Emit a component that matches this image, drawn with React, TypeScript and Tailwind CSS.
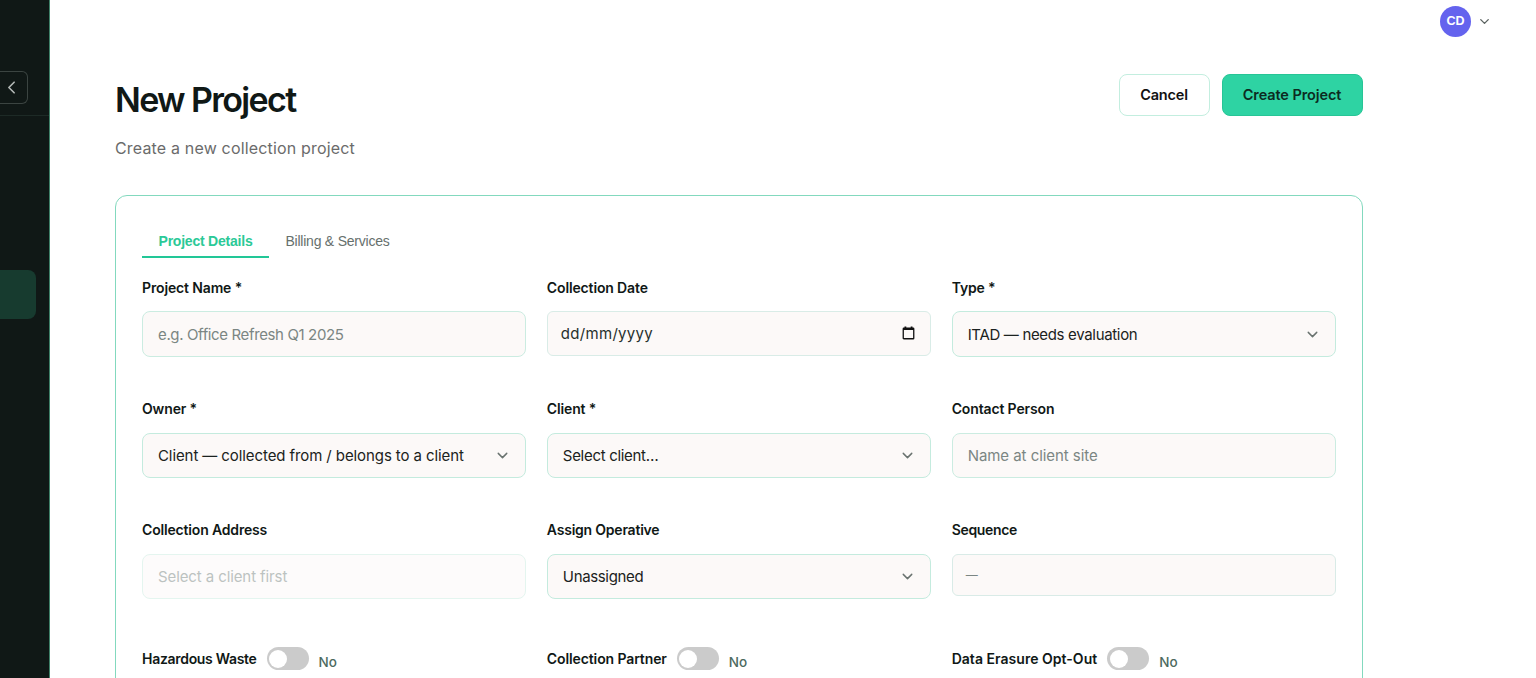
import React, { useState } from 'react';
import { ChevronDown, ChevronLeft } from 'lucide-react';

interface FieldProps {
  label: string;
  tracking?: string;
  children: React.ReactNode;
}

function Field({ label, tracking = 'tracking-[-0.14px]', children }: FieldProps) {
  return (
    <div className="h-[121.2px]">
      <label className={`block h-[33.4px] text-[14px] leading-5 font-semibold text-[#101816] ${tracking}`}>{label}</label>
      {children}
    </div>
  );
}

function TextInput({ placeholder, disabled, tracking = '' }: { placeholder: string; disabled?: boolean; tracking?: string }) {
  return (
    <input
      type="text"
      placeholder={placeholder}
      disabled={disabled}
      className={`block w-full h-[45.4px] px-[15px] pt-[1px] rounded-lg border border-[#cbece1] bg-[#fcf9f8] text-[15px] placeholder-[#7b8683] outline-none disabled:opacity-50 ${tracking}`}
    />
  );
}

function SelectBox({ value, tracking = '' }: { value: string; tracking?: string }) {
  return (
    <button
      type="button"
      className="flex items-center justify-between w-full h-[45.4px] pl-[15px] pr-3.5 rounded-lg border border-[#c4ebde] bg-[#fcf9f8] text-[15px] text-[#1b2220]"
    >
      <span className={`pt-[1.5px] ${tracking}`}>{value}</span>
      <ChevronDown size={17} strokeWidth={2} className="text-[#6a7370]" />
    </button>
  );
}

function Toggle({ label, tracking = '' }: { label: string; tracking?: string }) {
  const [on, setOn] = useState(false);

  return (
    <div className="flex items-center h-6">
      <span className={`text-[14px] leading-5 font-semibold text-[#101816] whitespace-nowrap ${tracking}`}>{label}</span>
      <button
        type="button"
        onClick={() => setOn(!on)}
        className={`flex items-center ml-2.5 w-[42px] h-[23px] px-[2.5px] rounded-full ${on ? 'justify-end bg-[#2ed3a3]' : 'bg-[#cbcbcb]'}`}
      >
        <span className="w-[18px] h-[18px] rounded-full bg-white" />
      </button>
      <span className="ml-2.5 pt-1.5 text-[13.5px] leading-5 font-medium text-[#4d6a60]">{on ? 'Yes' : 'No'}</span>
    </div>
  );
}

export default function App() {
  const [tab, setTab] = useState('details');

  return (
    <div className="flex h-[678px] overflow-hidden bg-white font-['Inter','Liberation_Sans',sans-serif]">
      {/* Sidebar */}
      <aside className="w-[50px] shrink-0 bg-[#101816] border-r border-[#3f8068]">
        <div className="h-[116px] pt-[71px] border-b border-[#1d2a26]">
          <button className="flex items-center w-7 h-[33px] pl-[1px] rounded-r-md border border-l-0 border-[#3b4441] text-[#b4b9b7]">
            <ChevronLeft size={21} strokeWidth={1.9} />
          </button>
        </div>
        <div className="mt-[154px] w-9 h-[49px] rounded-r-lg bg-[#173b2f]" />
      </aside>

      <div className="flex-1 min-w-0">
        {/* Top bar */}
        <header className="flex items-center justify-end h-11 pr-11">
          <div className="flex items-center justify-center w-[31px] h-[31px] mb-px rounded-full bg-[#6463ee] text-white font-['Liberation_Sans',sans-serif] text-[12.5px] font-bold">
            CD
          </div>
          <ChevronDown size={15} strokeWidth={2.2} className="mb-px ml-1.5 text-[#5c6361]" />
        </header>

        <main className="ml-[65px] w-[1247.5px]">
          <div className="flex items-start justify-between h-[151px] pt-[30px]">
            <div>
              <h1 className="pt-1 text-[34px] leading-[44px] font-semibold tracking-[-1.65px] text-[#101816]">New Project</h1>
              <p className="mt-3.5 text-base leading-6 tracking-[0.17px] text-[#6b6b6b]">Create a new collection project</p>
            </div>
            <div className="flex gap-3">
              <button className="w-[91px] h-[42px] rounded-lg border border-[#c3eedf] bg-white text-[14.5px] font-semibold tracking-[-0.2px] text-[#111]">
                Cancel
              </button>
              <button className="w-[141px] h-[42px] rounded-lg border border-[#27c596] bg-[#2ed3a3] text-[14.5px] font-semibold tracking-[-0.1px] text-[#0c2b21]">
                Create Project
              </button>
            </div>
          </div>

          {/* Form card */}
          <section className="h-[560px] rounded-xl border border-[#83d9be] bg-white px-[26px] pt-[29px]">
            <div className="flex h-[53px] font-['Liberation_Sans',sans-serif] text-[14px] tracking-[-0.22px]">
              <button
                onClick={() => setTab('details')}
                className={`w-[127px] h-[33px] pt-px border-b-2 whitespace-nowrap ${tab === 'details' ? 'border-[#22c797] text-[#2bc997] font-bold' : 'border-transparent text-[#66706d]'}`}
              >
                Project Details
              </button>
              <button
                onClick={() => setTab('billing')}
                className={`w-[137px] h-[33px] pt-px border-b-2 whitespace-nowrap ${tab === 'billing' ? 'border-[#22c797] text-[#2bc997] font-bold' : 'border-transparent text-[#66706d]'}`}
              >
                Billing &amp; Services
              </button>
            </div>

            <div className="grid grid-cols-3 gap-x-[21px]">
              <Field label="Project Name *">
                <TextInput placeholder="e.g. Office Refresh Q1 2025" tracking="tracking-[-0.37px]" />
              </Field>
              <Field label="Collection Date">
                <div className="flex items-center justify-between h-[44.4px] pl-[13px] pr-[15px] rounded-md border border-[#d9ece7] bg-[#fcf9f8] text-[15px] text-[#27302d]">
                  <span className="pt-[1.5px] tracking-[0.3px]">dd/mm/yyyy</span>
                  <svg width="13" height="14" viewBox="0 0 13 14" fill="none" className="mb-px text-[#111]">
                    <rect x="1.25" y="2.25" width="10.5" height="10.5" rx="0.6" stroke="currentColor" strokeWidth="1.3" />
                    <path d="M1 3.2h11M3.4 0.6v2M9.6 0.6v2" stroke="currentColor" strokeWidth="1.8" />
                  </svg>
                </div>
              </Field>
              <Field label="Type *">
                <SelectBox value="ITAD — needs evaluation" tracking="tracking-[-0.33px]" />
              </Field>

              <Field label="Owner *">
                <SelectBox value="Client — collected from / belongs to a client" tracking="tracking-[-0.09px]" />
              </Field>
              <Field label="Client *">
                <SelectBox value="Select client…" tracking="tracking-[-0.3px]" />
              </Field>
              <Field label="Contact Person">
                <TextInput placeholder="Name at client site" tracking="tracking-[-0.05px]" />
              </Field>

              <Field label="Collection Address" tracking="tracking-[-0.17px]">
                <TextInput placeholder="Select a client first" disabled tracking="tracking-[-0.1px]" />
              </Field>
              <Field label="Assign Operative" tracking="tracking-[-0.22px]">
                <SelectBox value="Unassigned" tracking="tracking-[-0.35px]" />
              </Field>
              <Field label="Sequence" tracking="tracking-[-0.32px]">
                <div className="flex items-center h-[42.4px] px-[13px] pt-px rounded-md border border-[#d9ebe7] bg-[#fcf9f8] text-[12px] text-[#7b8683]">—</div>
              </Field>
            </div>

            <div className="grid grid-cols-3 gap-x-[21px] pt-[5px]">
              <Toggle label="Hazardous Waste" tracking="tracking-[-0.3px]" />
              <Toggle label="Collection Partner" tracking="tracking-[-0.11px]" />
              <Toggle label="Data Erasure Opt-Out" tracking="tracking-[0.03px]" />
            </div>
          </section>
        </main>
      </div>
    </div>
  );
}
